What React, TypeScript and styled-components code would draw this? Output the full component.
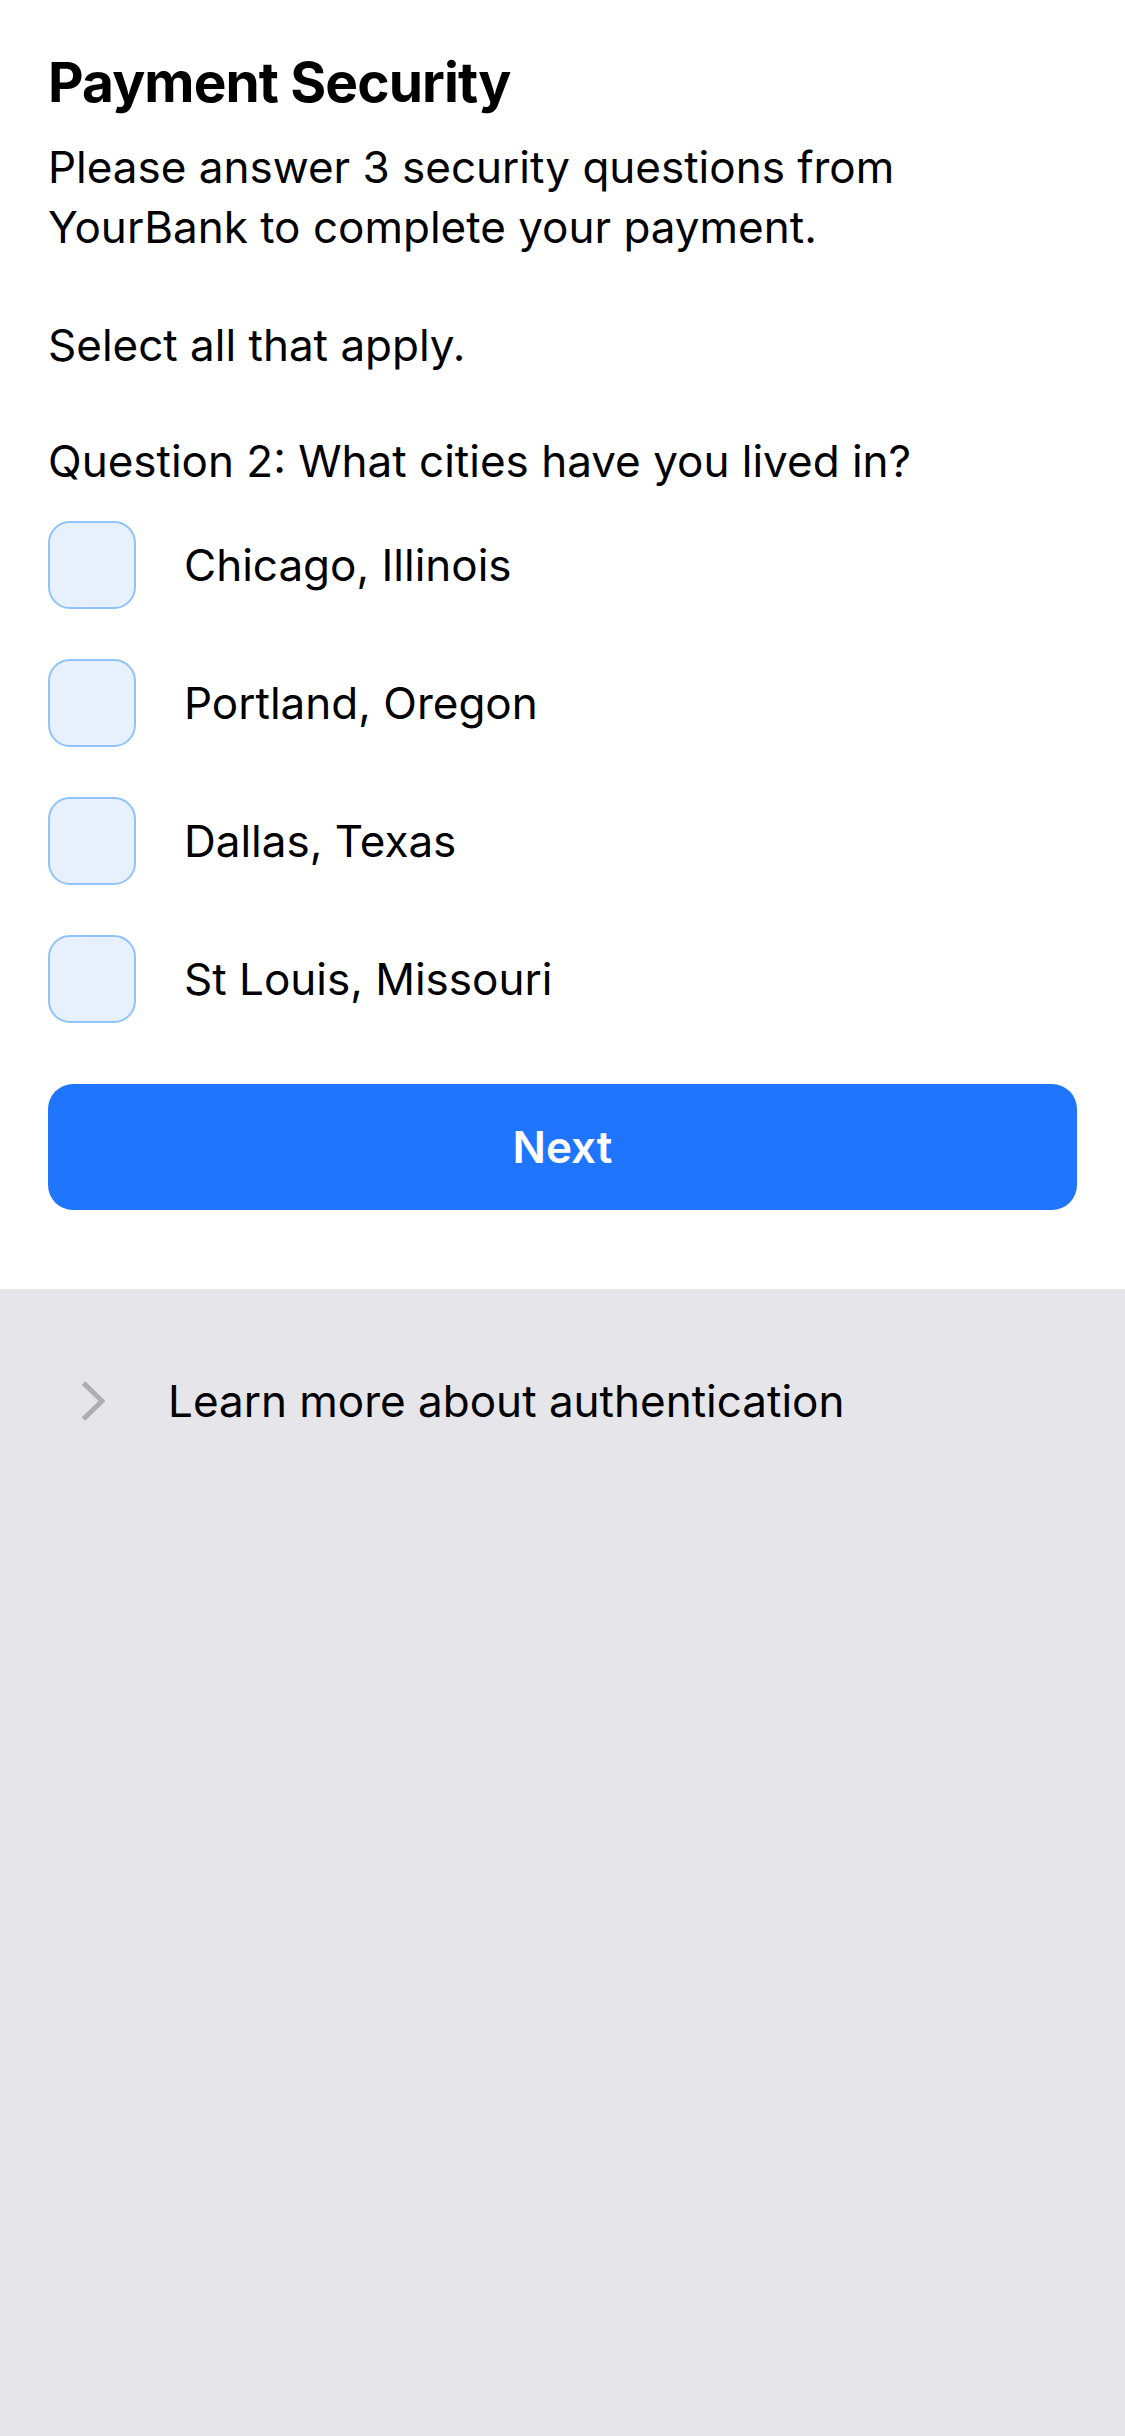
import * as React from 'react';
import styled, { createGlobalStyle } from 'styled-components';

const GlobalStyle = createGlobalStyle`
  html, body {
    margin: 0;
    padding: 0;
    background-color: #e5e5ea;
  }
  body {
    font-family: Inter, "Noto Sans", "Liberation Sans", sans-serif;
    color: #000;
    -webkit-font-smoothing: antialiased;
  }
`;

const Page = styled.div`
  width: 1125px;
  min-height: 2436px;
  background-color: #e5e5ea;
`;

/**
 * 上段（質問カード）
 */
const Card = styled.section`
  background-color: #fff;
  padding: 49px 48px 79px;
`;

const Title = styled.h1`
  margin: 0;
  font-size: 55px;
  line-height: 66px;
  font-weight: 700;
  letter-spacing: -0.9px;
`;

const Text = styled.p<{ $gap: number }>`
  margin: ${p => p.$gap}px 0 0;
  font-size: 44px;
  line-height: 60px;
  font-weight: 400;
`;

const OptionList = styled.ul`
  list-style: none;
  margin: 30px 0 0;
  padding: 0;
  display: flex;
  flex-direction: column;
  gap: 50px;
`;

const OptionRow = styled.li`
  display: flex;
  align-items: center;
  gap: 48px;
  height: 88px;
`;

const Box = styled.span`
  box-sizing: border-box;
  width: 88px;
  height: 88px;
  flex: none;
  border-radius: 22px;
  border: 2.5px solid #90c3f9;
  background-color: #e7f0fd;
`;

const OptionLabel = styled.span`
  font-size: 44px;
  line-height: 60px;
`;

const NextButton = styled.button`
  display: block;
  width: 100%;
  height: 126px;
  margin-top: 61px;
  border: none;
  border-radius: 25px;
  background-color: #1f75fe;
  color: #fff;
  font-family: inherit;
  font-size: 44px;
  font-weight: 600;
`;

/**
 * 下段（リンク）
 */
const Footer = styled.div`
  padding: 82px 0 0 81px;
`;

const LinkRow = styled.div`
  display: flex;
  align-items: center;
  gap: 63px;
`;

const LinkText = styled.span`
  font-size: 44px;
  line-height: 60px;
`;

const Chevron = () => (
  <svg width="24" height="40" viewBox="0 0 24 40">
    <polyline
      points="2.5,2 21,20 2.5,38"
      fill="none"
      stroke="#aeaeb2"
      strokeWidth="5"
    />
  </svg>
);

const cities = [
  'Chicago, Illinois',
  'Portland, Oregon',
  'Dallas, Texas',
  'St Louis, Missouri',
];

const App = () => {
  return (
    <>
      <GlobalStyle />
      <Page>
        <Card>
          <Title>Payment Security</Title>
          <Text $gap={22}>
            Please answer 3 security questions from
            <br />
            YourBank to complete your payment.
          </Text>
          <Text $gap={58}>Select all that apply.</Text>
          <Text $gap={56}>Question 2: What cities have you lived in?</Text>

          <OptionList>
            {cities.map(c => (
              <OptionRow key={c}>
                <Box />
                <OptionLabel>{c}</OptionLabel>
              </OptionRow>
            ))}
          </OptionList>

          <NextButton>Next</NextButton>
        </Card>

        <Footer>
          <LinkRow>
            <Chevron />
            <LinkText>Learn more about authentication</LinkText>
          </LinkRow>
        </Footer>
      </Page>
    </>
  );
};

export default App;
